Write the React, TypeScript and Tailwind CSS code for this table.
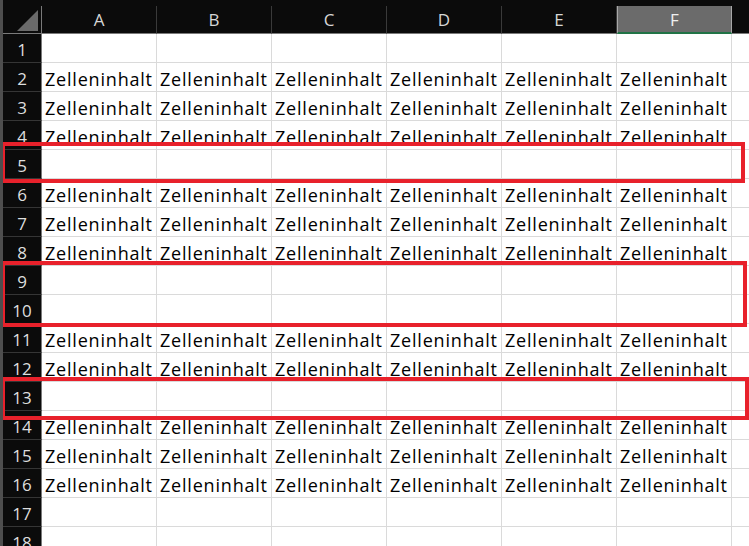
import React from 'react';

const columns = ['A', 'B', 'C', 'D', 'E', 'F'];
const filledRows = [2, 3, 4, 6, 7, 8, 11, 12, 14, 15, 16];
const rows = Array.from({ length: 18 }, (_, i) => i + 1);

const font = { fontFamily: '"Open Sans", "Noto Sans", sans-serif' };

const App: React.FC = () => {
  return (
    <div className="relative w-[749px] h-[546px] overflow-hidden bg-white border-l-[3px] border-[#4e4e4e]" style={font}>
      {/* column header */}
      <div className="flex h-[34px] bg-[#0b0b0b] pt-[6px]">
        <div className="w-[39px] shrink-0 border-r border-b border-[#7a7a7a] relative">
          <svg width="21" height="21" viewBox="0 0 21 21" className="absolute left-[14px] top-[4px]">
            <polygon points="0,21 21,21 21,0" fill="#6a6a6a" />
          </svg>
        </div>
        {columns.map((c) => (
          <div
            key={c}
            className={
              c === 'F'
                ? 'w-[115px] shrink-0 flex items-end justify-center text-[17px] leading-[24px] text-[#f0f0f0] bg-[#6b6b6b] border-x border-[#a8a8a8] border-b-2 border-b-[#217346]'
                : 'w-[115px] shrink-0 flex items-end justify-center text-[17px] leading-[24px] pb-[1px] text-[#d6d6d6] border-r border-b border-r-[#3a3a3a] border-b-[#7a7a7a]'
            }
          >
            {c}
          </div>
        ))}
        <div className="flex-1 border-b border-[#7a7a7a]" />
      </div>

      {rows.map((r) => (
        <div key={r} className="flex h-[29px]">
          <div className="w-[39px] shrink-0 bg-[#0b0b0b] border-r border-r-[#7a7a7a] border-b border-b-[#353535] flex items-end justify-center text-[17px] leading-[24px] text-[#dedede]">
            {r}
          </div>
          {columns.map((c) => (
            <div
              key={c}
              className="w-[115px] shrink-0 border-r border-b border-[#dadada] flex items-end pl-[3px] text-[18px] leading-[24px] font-medium tracking-[0.8px] text-black whitespace-nowrap overflow-hidden"
            >
              {filledRows.includes(r) ? 'Zelleninhalt' : ''}
            </div>
          ))}
          <div className="flex-1 border-b border-[#dadada]" />
        </div>
      ))}

      {/* highlighted empty rows */}
      <div className="absolute left-[-2px] top-[142px] w-[744px] h-[41px] border-4 border-[#e8212b]" />
      <div className="absolute left-[-2px] top-[261px] w-[746px] h-[66px] border-4 border-[#e8212b]" />
      <div className="absolute left-[-2px] top-[377px] w-[748px] h-[43px] border-4 border-[#e8212b]" />
    </div>
  );
};

export default App;
